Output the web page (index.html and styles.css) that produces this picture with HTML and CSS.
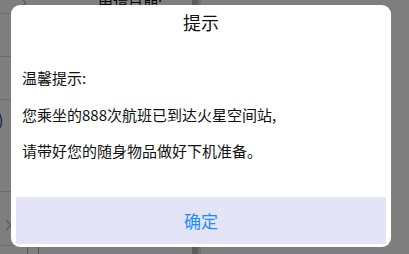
FILE: index.html
```html
<!DOCTYPE html>
<html lang="zh-CN">
<head>
  <meta charset="UTF-8">
  <meta name="viewport" content="width=device-width, initial-scale=1.0">
  <title>提示</title>
  <link rel="stylesheet" href="styles.css">
</head>
<body>
  <div class="page">
    <div class="page-left">
      <div class="row row-top">
        <span class="back">&#8250;</span>
        <span class="label">申请日期:</span>
      </div>
      <div class="row"></div>
      <div class="row"></div>
      <div class="row row-tall"><span class="paren">)</span></div>
      <div class="row row-foot">
        <span class="close">&times;</span>
      </div>
      <div class="cols">
        <span class="col-line"></span>
        <span class="col-line"></span>
      </div>
    </div>
    <div class="page-bar"></div>
    <div class="page-right"></div>
  </div>

  <div class="mask">
    <div class="dialog">
      <div class="dialog-title">提示</div>
      <div class="dialog-body">
        <p>温馨提示:</p>
        <p>您乘坐的888次航班已到达火星空间站,</p>
        <p>请带好您的随身物品做好下机准备。</p>
      </div>
      <button class="dialog-btn">确定</button>
    </div>
  </div>
</body>
</html>
```

FILE: styles.css
```css
html, body { margin: 0; height: 100%; }
body { font-family: "Noto Sans CJK SC", "Microsoft YaHei", sans-serif; color: #000; background: #fff; overflow: hidden; }

/* page under the mask */
.page { display: flex; height: 100%; }
.page-left { width: 192px; display: flex; flex-direction: column; }
.row { height: 42px; border-bottom: 1px solid #ddd; display: flex; align-items: center; }
.row-top { height: 13px; align-items: flex-end; overflow: hidden; font-size: 15px; line-height: 20px; }
.row-tall { height: 91px; align-items: flex-start; }
.row-foot { height: 53px; }
.back { margin-left: 22px; color: #999; width: 76px; line-height: 24px; }
.label { color: #111; line-height: 22px; }
.paren { color: #1a3a6a; font-size: 16px; margin-left: -2px; margin-top: 7px; }
.close { color: #aaa; font-size: 16px; margin-left: 3px; margin-top: 10px; }
.cols { flex: 1; display: flex; gap: 10px; padding-left: 27px; }
.col-line { width: 1px; background: #aaa; }
.page-bar { width: 6px; background: #bbb; border-right: 3px solid #e0e0e0; }
.page-right { flex: 1; }

/* dialog */
.mask { position: fixed; inset: 0; background: rgba(0, 0, 0, 0.5); padding: 5px 18px 7px 11px; display: flex; }
.dialog { flex: 1; background: #fff; border-radius: 9px; padding: 0 5px 3px; display: flex; flex-direction: column; }
.dialog-title { height: 34px; line-height: 34px; text-align: center; font-size: 18px; color: #111; }
.dialog-body { flex: 1; padding: 28px 6px 0; font-size: 15px; color: #111; }
.dialog-body p { margin: 0 0 14.5px; line-height: 22px; white-space: nowrap; }
.dialog-btn { height: 47px; border: none; background: #e4e4f9; color: #1e8cff; font-family: inherit; font-size: 17px; cursor: pointer; }
```
